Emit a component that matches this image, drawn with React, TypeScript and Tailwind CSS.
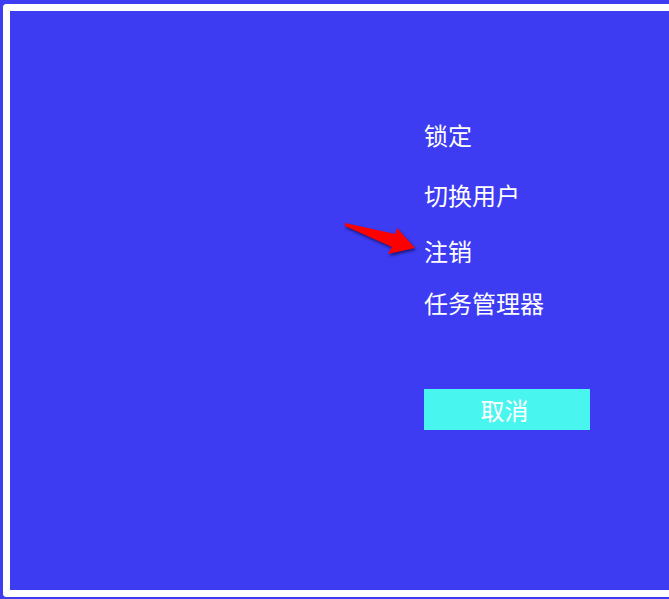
export default function App() {
  return (
    <div className="w-[669px] h-[599px] overflow-hidden bg-[#3d3cf3] pl-[3px] pt-[4px]" style={{ fontFamily: '"Noto Sans CJK SC", "Noto Sans", sans-serif' }}>
      <div className="relative w-[720px] h-[593px] border-l-[7px] border-t-[7px] border-b-[7px] border-white rounded-tl-[4px] rounded-bl-[4px] bg-[#3d3cf3]">
        <div className="flex flex-col items-start pl-[414px] pt-[112px] text-white text-[24px] leading-[24px]">
          <div>锁定</div>
          <div className="mt-[36px]">切换用户</div>
          <div className="mt-[32px]">注销</div>
          <div className="mt-[28px]">任务管理器</div>
          <button className="mt-[74px] w-[166px] h-[41px] pr-[5px] bg-[#48f6ef] text-white text-[24px] leading-[24px] flex items-center justify-center">
            取消
          </button>
        </div>
        <svg className="absolute left-[325px] top-[202px]" width="100" height="60" viewBox="325 202 100 60" style={{ filter: 'drop-shadow(1px 2px 1.5px rgba(0,0,40,0.6))' }}>
          <polygon points="345,223 395,234 397,228 415,248 388,254 392,247 345,226" fill="#ff0000" transform="translate(-10,-11)" />
        </svg>
      </div>
    </div>
  );
}
